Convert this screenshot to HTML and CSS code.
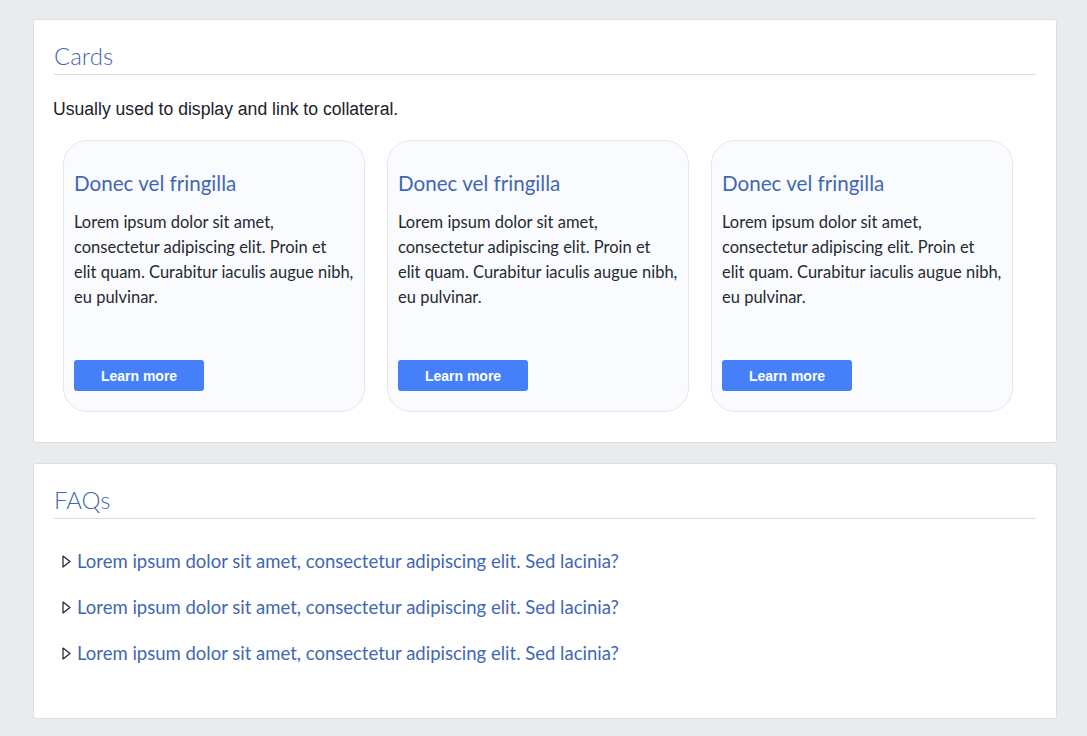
FILE: index.html
```html
<!DOCTYPE html>
<html lang="en">
<head>
<meta charset="utf-8">
<title>Cards and FAQs</title>
<link rel="stylesheet" href="styles.css">
</head>
<body>
<main class="page">
  <section class="panel">
    <h2 class="panel-title">Cards</h2>
    <p class="intro">Usually used to display and link to collateral.</p>
    <div class="cards">
      <article class="card">
        <h3 class="card-title">Donec vel fringilla</h3>
        <p class="card-text">Lorem ipsum dolor sit amet,<br>consectetur adipiscing elit. Proin et<br>elit quam. Curabitur iaculis augue nibh,<br>eu pulvinar.</p>
        <a class="btn" href="#">Learn more</a>
      </article>
      <article class="card">
        <h3 class="card-title">Donec vel fringilla</h3>
        <p class="card-text">Lorem ipsum dolor sit amet,<br>consectetur adipiscing elit. Proin et<br>elit quam. Curabitur iaculis augue nibh,<br>eu pulvinar.</p>
        <a class="btn" href="#">Learn more</a>
      </article>
      <article class="card">
        <h3 class="card-title">Donec vel fringilla</h3>
        <p class="card-text">Lorem ipsum dolor sit amet,<br>consectetur adipiscing elit. Proin et<br>elit quam. Curabitur iaculis augue nibh,<br>eu pulvinar.</p>
        <a class="btn" href="#">Learn more</a>
      </article>
    </div>
  </section>

  <section class="panel panel-faq">
    <h2 class="panel-title">FAQs</h2>
    <ul class="faq-list">
      <li class="faq-item">
        <svg class="marker" width="9" height="13" viewBox="0 0 9 13"><path d="M1 1 L8 6.5 L1 12 Z" fill="none" stroke="#1d2129" stroke-width="1.2" stroke-linejoin="round"/></svg>
        <span class="faq-q">Lorem ipsum dolor sit amet, consectetur adipiscing elit. Sed lacinia?</span>
      </li>
      <li class="faq-item">
        <svg class="marker" width="9" height="13" viewBox="0 0 9 13"><path d="M1 1 L8 6.5 L1 12 Z" fill="none" stroke="#1d2129" stroke-width="1.2" stroke-linejoin="round"/></svg>
        <span class="faq-q">Lorem ipsum dolor sit amet, consectetur adipiscing elit. Sed lacinia?</span>
      </li>
      <li class="faq-item">
        <svg class="marker" width="9" height="13" viewBox="0 0 9 13"><path d="M1 1 L8 6.5 L1 12 Z" fill="none" stroke="#1d2129" stroke-width="1.2" stroke-linejoin="round"/></svg>
        <span class="faq-q">Lorem ipsum dolor sit amet, consectetur adipiscing elit. Sed lacinia?</span>
      </li>
    </ul>
  </section>
</main>
</body>
</html>
```

FILE: styles.css
```css
* { box-sizing: border-box; }

html, body {
  margin: 0;
  padding: 0;
}

body {
  background: #e9ebee;
  font-family: "Lato", "Open Sans", sans-serif;
  color: #1d2129;
}

.page {
  padding: 19px 30px 18px 33px;
  display: flex;
  flex-direction: column;
  gap: 20px;
}

.panel {
  background: #fff;
  border: 1px solid #dddfe2;
  border-radius: 3px;
  padding: 20px 20px 30px 20px;
}

.panel-title {
  margin: 0;
  font-family: "Lato", sans-serif;
  font-weight: 300;
  font-size: 24px;
  line-height: 32px;
  color: #4267b2;
  padding-bottom: 2px;
  border-bottom: 1px solid #dadde1;
}

.intro {
  margin: 22px 0 0 -1px;
  font-family: "Liberation Sans", Arial, sans-serif;
  font-size: 17.6px;
  line-height: 24px;
  color: #1d2129;
}

.cards {
  display: flex;
  gap: 22px;
  padding-left: 9px;
  margin-top: 19px;
}

.card {
  width: 302px;
  height: 272px;
  background: #f9fbfe;
  border: 1px solid #e5e7eb;
  border-radius: 24px;
  padding: 30px 0 20px 10px;
  display: flex;
  flex-direction: column;
}

.card-title {
  margin: 0;
  font-weight: 400;
  font-size: 20.6px;
  line-height: 24px;
  color: #4267b2;
}

.card-text {
  margin: 15px 0 0 0;
  font-size: 16.5px;
  line-height: 25px;
  color: #262a31;
  white-space: nowrap;
}

.btn {
  margin-top: auto;
  display: inline-flex;
  align-items: center;
  justify-content: center;
  width: 130px;
  height: 31px;
  background: #4580f9;
  border-radius: 3px;
  color: #fff;
  text-decoration: none;
  font-family: "Liberation Sans", Arial, sans-serif;
  font-weight: 700;
  font-size: 14px;
}

.panel-faq {
  padding-bottom: 51px;
}

.faq-list {
  list-style: none;
  margin: 28px 0 0 0;
  padding: 0 0 0 8px;
  display: flex;
  flex-direction: column;
  gap: 18px;
}

.faq-item {
  display: flex;
  align-items: center;
  gap: 6px;
  line-height: 28px;
}

.marker {
  flex: none;
}

.faq-q {
  font-size: 18.5px;
  color: #4267b2;
}
```
